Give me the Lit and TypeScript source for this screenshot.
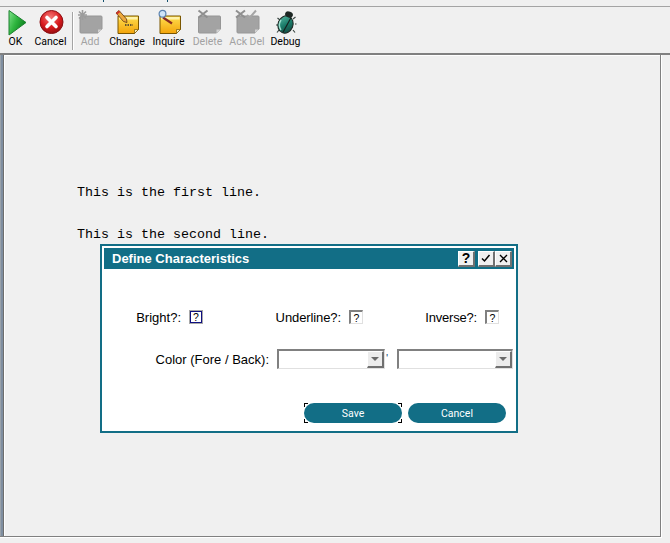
import { LitElement, html, css, svg } from "lit";
import { customElement } from "lit/decorators.js";

const gray = (extra: unknown, dx = 0) => svg`<svg class="ic" viewBox="0 0 26 26" width="26" height="26">
  <g transform="translate(${dx},0)">
  <path d="M4 7q0-1 1-1h19q1 0 1 1v12l-4 4H4q-1 0-1-1V7z" fill="#a3a3a3" stroke="#969696" stroke-width="1"/>
  <path d="M21 23v-3.500h4z" fill="#d2d2d2"/>
  ${extra}
  </g>
</svg>`;

const noteBody = svg`
  <path d="M4 6h20.500v13.500l-4 4H4z" fill="url(#note)" stroke="#7a5600" stroke-width="1"/>
  <path d="M5 7h18.500v2.500H5z" fill="#fff2a8"/>
  <path d="M20.500 23.500v-4h4z" fill="#f6eebc" stroke="#7a5600" stroke-width=".7"/>`;

const icons: Record<string, unknown> = {
  OK: svg`<svg class="ic" viewBox="0 0 26 26" width="26" height="26">
    <defs><linearGradient id="g" x1="0" x2="1" y1="0" y2="0.600"><stop offset="0" stop-color="#82e38c"/><stop offset=".5" stop-color="#2fb63f"/><stop offset="1" stop-color="#0b7d1c"/></linearGradient></defs>
    <path d="M6 .5L23 12.500 6 25z" fill="url(#g)" stroke="#1d8030" stroke-width="1" stroke-linejoin="round"/></svg>`,
  Cancel: svg`<svg class="ic" viewBox="0 0 26 26" width="26" height="26">
    <defs><radialGradient id="r" cx=".45" cy=".3" r=".8"><stop offset="0" stop-color="#f47a78"/><stop offset=".55" stop-color="#d8191d"/><stop offset="1" stop-color="#7e0a0c"/></radialGradient></defs>
    <circle cx="13.500" cy="12" r="11.500" fill="url(#r)" stroke="#8c1014"/>
    <path d="M9 7.500l9 9M18 7.500l-9 9" stroke="#fff" stroke-width="3.600" stroke-linecap="round"/></svg>`,
  Add: gray(svg`<path d="M5.500 0v10M1 5h9M2 1.500l7 7M9 1.500l-7 7" stroke="#9c9c9c" stroke-width="1.600"/>`),
  Change: svg`<svg class="ic" viewBox="0 0 26 26" width="26" height="26">
    <defs><linearGradient id="note" x1="0" x2="0" y1="0" y2="1"><stop offset="0" stop-color="#ffdf50"/><stop offset="1" stop-color="#f3a40a"/></linearGradient></defs>
    ${noteBody}
    <path d="M11 15h8" stroke="#333" stroke-width="1.500" stroke-dasharray="1.500 1"/>
    <path d="M2 3l3-2.500 7.500 8.500 .5 3.500-3.500-1z" fill="#eda93c" stroke="#5e3510" stroke-width=".8"/><path d="M2 3l3-2.500 1.200 1.500-3 2.500z" fill="#d0302a"/></svg>`,
  Inquire: svg`<svg class="ic" viewBox="0 0 26 26" width="26" height="26">
    ${noteBody}
    <path d="M7 7.500l9 6" stroke="#8a2a20" stroke-width="2.200"/>
    <circle cx="6.500" cy="3.800" r="3.400" fill="#cfe4f7" stroke="#5a82b0" stroke-width="1.200"/></svg>`,
  Delete: gray(svg`<path d="M3 .5l9 7M12 .5l-9 7" stroke="#8f8f8f" stroke-width="2"/>`, 0.5),
  "Ack Del": gray(svg`<path d="M2 .5l9 7M11 .5l-9 7" stroke="#8f8f8f" stroke-width="2"/><path d="M13 5l2.500 3L22 .5" fill="none" stroke="#a5a5a5" stroke-width="2"/>`),
  Debug: svg`<svg class="ic" viewBox="0 0 26 26" width="26" height="26">
    <defs><linearGradient id="bug" x1="0" x2="1" y1="0" y2="1"><stop offset="0" stop-color="#5fbfa8"/><stop offset=".5" stop-color="#1b7c6a"/><stop offset="1" stop-color="#123c36"/></linearGradient></defs>
    <path d="M7 10L4.500 8M5 15H3M6 20l-2 2.500M20 9l2.500-2M22 14h1.500M20 20l2 2.500" stroke="#3a4642" stroke-width="1.200" fill="none"/>
    <ellipse cx="12.500" cy="14.500" rx="7.500" ry="8.800" transform="rotate(22 12.500 14.500)" fill="url(#bug)" stroke="#1c2622"/>
    <path d="M15 6.500l-2 17" stroke="#15211e" stroke-width="1.200" transform="rotate(22 14 15)"/>
    <path d="M8 10c-2 3-2 7 0 10" stroke="#9fe0cf" stroke-width="1.400" fill="none"/>
    <ellipse cx="16" cy="4.500" rx="4" ry="3" transform="rotate(22 16 4.500)" fill="#1c2622"/></svg>`,
};

const items: [string, number, boolean][] = [
  ["OK", 31, false], ["Cancel", 39, false], ["sep", 0, false], ["Add", 32, true], ["Change", 42, false],
  ["Inquire", 41, false], ["Delete", 37, true], ["Ack Del", 42, true], ["Debug", 35, false],
];

@customElement("app-root")
export class AppRoot extends LitElement {
  static styles = css`
    :host { display: block; width: 670px; height: 543px; background: #f0f0f0; overflow: hidden;
      font-family: "Liberation Sans", Arial, sans-serif; position: relative; }
    .topline { height: 7px; box-sizing: border-box; border-bottom: 1px solid #a4a4a4; display: flex; }
    .desc { width: 1px; height: 2px; background: #12506e; }
    .desc.a { margin-left: 103px; }
    .desc.b { margin-left: 63px; }
    .toolbar { display: flex; height: 46px; align-items: flex-start; }
    .tool { display: flex; flex-direction: column; align-items: center; height: 46px; padding-top: 3px; box-sizing: border-box;
      font: 10.5px/12px Roboto, "Liberation Sans", sans-serif; color: #000; }
    .tool.off { color: #a2a2a2; }
    .tool span { white-space: nowrap; }
    .ic { display: block; flex: none; overflow: visible; }
    .sep { width: 1px; height: 38px; margin: 5px 0 0 2px; background: #a4a4a4; border-right: 1px solid #fff; }
    .work { border-top: 2px solid #808080; }
    .frame { width: 662px; height: 483px; box-sizing: border-box; border-right: 1px solid #fff; border-bottom: 1px solid #fff; }
    .pane { height: 482px; box-sizing: border-box; padding-left: 4px; border-right: 1px solid #808080; border-bottom: 1px solid #808080;
      background: linear-gradient(90deg, #9aa2aa 0 1px, #7f8ea0 1px 3px, #6e6e6e 3px 4px); }
    .inner { height: 100%; box-sizing: border-box; background: #f0f0f0; border-left: 1px solid #fff; border-top: 1px solid #fff; padding: 126px 0 0 72px; }
    pre { margin: 0; font: 13.33px/21px "Liberation Mono", monospace; color: #000; }
    .dialog { position: absolute; left: 100px; top: 244px; width: 418px; height: 189px; box-sizing: border-box; border: 2px solid #126e86; background: #fff; padding: 2px; display: flex; flex-direction: column; }
    .title { height: 21px; flex: none; background: #126e86; color: #fff; font-weight: bold; font-size: 13px; padding: 0 2px 0 8px; display: flex; align-items: center; justify-content: space-between; }
    .tbtns { display: flex; }
    .tbtn { width: 17px; height: 16px; background: #f0f0f0; box-sizing: border-box; border: 1px solid; border-width: 1px 2px 2px 1px; border-color: #fff #707070 #707070 #fff; color: #000; display: flex; align-items: center; justify-content: center; font-weight: bold; font-size: 14px; }
    .tbtn svg { display: block; }
    .tbtn.gap { margin-right: 3px; }
    .body { flex: 1; display: flex; flex-direction: column; font-size: 13px; color: #000; }
    .row1 { display: flex; margin-top: 41px; height: 14px; }
    .pair { display: flex; justify-content: flex-end; align-items: center; gap: 8px; white-space: nowrap; }
    .p1 { width: 99px; } .p2 { width: 160px; } .p3 { width: 136px; }
    .t1 { letter-spacing: -0.1px; } .t2 { letter-spacing: -0.2px; }
    .chk { width: 14px; height: 14px; box-sizing: border-box; border: 1px solid; border-width: 2px 1px 1px 2px; border-color: #808080 #e0e0e0 #e0e0e0 #808080; background: #fff; font-size: 10.5px; display: flex; align-items: center; justify-content: center; }
    .chk.focus { border: 1px solid #a8a8a8; box-shadow: inset 0 0 0 1px #101080; }
    .row2 { display: flex; align-items: center; margin-top: 25px; height: 20px; }
    .colorlbl { width: 165px; text-align: right; margin-right: 8px; white-space: nowrap; }
    .sel { width: 108px; height: 20px; box-sizing: border-box; border: 1px solid; border-width: 2px 1px 1px 2px; border-color: #808080 #e0e0e0 #e0e0e0 #808080; background: #fff; display: flex; justify-content: flex-end; }
    .sel.wide { width: 116px; }
    .arrow { width: 17px; height: 17px; background: #ececec; box-sizing: border-box; border: 1px solid; border-width: 1px 2px 2px 1px; border-color: #fff #707070 #707070 #fff; display: flex; align-items: center; justify-content: center; }
    .arrow i { display: block; width: 0; height: 0; border-left: 4px solid transparent; border-right: 4px solid transparent; border-top: 4px solid #6a6a6a; }
    .tick { width: 12px; padding: 3px 0 0 1px; box-sizing: border-box; align-self: flex-start; color: #1a4a80; font-size: 11px; line-height: 12px; }
    .btns { display: flex; margin-top: 34px; padding-left: 200px; gap: 6px; }
    .btn { position: relative; width: 98px; height: 20px; border-radius: 10px; background: #126e86; color: #fff; font: 10.5px Roboto, "Liberation Sans", sans-serif; display: flex; align-items: center; justify-content: center; }
    .c { position: absolute; width: 3px; height: 3px; border: 0 solid #000; }
    .tl { left: 0; top: 0; border-width: 1px 0 0 1px; }
    .tr { right: 0; top: 0; border-width: 1px 1px 0 0; }
    .bl { left: 0; bottom: 0; border-width: 0 0 1px 1px; }
    .br { right: 0; bottom: 0; border-width: 0 1px 1px 0; }
  `;

  render() {
    return html`
      <div class="topline"><div class="desc a"></div><div class="desc b"></div></div>
      <div class="toolbar">
        ${items.map(([n, w, off]) => n === "sep"
          ? html`<div class="sep"></div>`
          : html`<div class="tool ${off ? "off" : ""}" style="width:${w}px">${icons[n]}<span>${n}</span></div>`)}
      </div>
      <div class="work"><div class="frame"><div class="pane"><div class="inner"><pre>This is the first line.

This is the second line.</pre></div></div></div></div>
      <div class="dialog">
        <div class="title"><span>Define Characteristics</span>
          <div class="tbtns">
            <div class="tbtn gap">?</div>
            <div class="tbtn"><svg width="10" height="9" viewBox="0 0 10 9"><path d="M1 4.500l2.500 2.500 5-6" fill="none" stroke="#000" stroke-width="1.500"/></svg></div>
            <div class="tbtn"><svg width="9" height="9" viewBox="0 0 9 9"><path d="M1 1l7 7M8 1l-7 7" fill="none" stroke="#000" stroke-width="1.400"/></svg></div>
          </div>
        </div>
        <div class="body">
          <div class="row1">
            <div class="pair p1"><span>Bright?:</span><div class="chk focus">?</div></div>
            <div class="pair p2"><span class="t1">Underline?:</span><div class="chk">?</div></div>
            <div class="pair p3"><span class="t2">Inverse?:</span><div class="chk">?</div></div>
          </div>
          <div class="row2">
            <div class="colorlbl">Color (Fore / Back):</div>
            <div class="sel"><div class="arrow"><i></i></div></div>
            <div class="tick">'</div>
            <div class="sel wide"><div class="arrow"><i></i></div></div>
          </div>
          <div class="btns">
            <div class="btn">Save<i class="c tl"></i><i class="c tr"></i><i class="c bl"></i><i class="c br"></i></div>
            <div class="btn">Cancel</div>
          </div>
        </div>
      </div>`;
  }
}
